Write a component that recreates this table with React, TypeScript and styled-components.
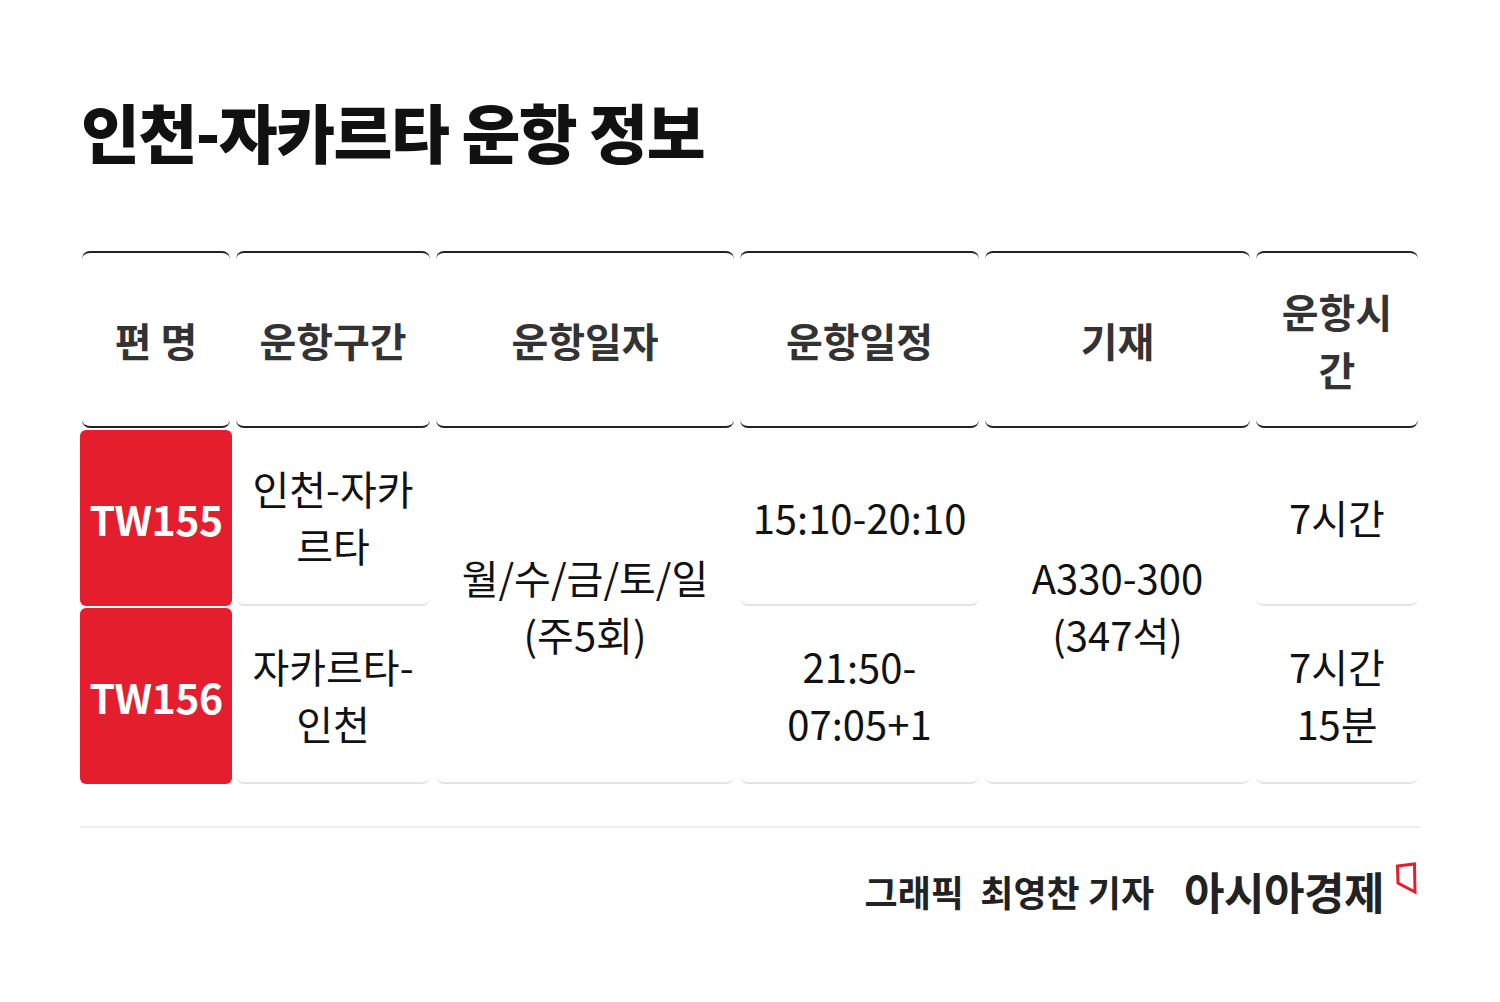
import React from "react";
import styled, { createGlobalStyle } from "styled-components";

const Global = createGlobalStyle`
  html, body { margin: 0; padding: 0; background: #fff; }
  body { font-family: "Noto Sans CJK KR", "Noto Sans", sans-serif; }
`;

const Page = styled.div`
  width: 1500px;
  height: 1002px;
  box-sizing: border-box;
  padding: 82px 80px 0 80px;
  background: #fff;
`;

const Title = styled.h1`
  margin: 0 0 0 1px;
  font-size: 64px;
  line-height: 96px;
  font-weight: 900;
  letter-spacing: -1.5px;
  color: #111;
`;

const Grid = styled.div`
  margin-top: 73px;
  display: grid;
  grid-template-columns: 152px 198px 302px 243px 269px minmax(0, 1fr);
  grid-template-rows: 177px 176px 176px;
  column-gap: 2px;
  row-gap: 2px;
`;

const HeadCell = styled.div`
  margin: 0 2px;
  min-width: 0;
  border-top: 2px solid #222;
  border-bottom: 2px solid #222;
  border-radius: 8px;
  display: flex;
  align-items: center;
  justify-content: center;
  text-align: center;
  font-size: 40px;
  line-height: 58px;
  font-weight: 700;
  color: #333;
  padding: 0 16px;
`;

const Cell = styled.div<{ $rows?: number }>`
  margin: 0 2px;
  min-width: 0;
  grid-row: span ${(p) => p.$rows ?? 1};
  border-bottom: 2px solid #e4e4e4;
  border-radius: 8px;
  display: flex;
  align-items: center;
  justify-content: center;
  text-align: center;
  font-size: 40px;
  line-height: 57px;
  font-weight: 400;
  color: #111;
  padding: 0 8px;
`;

const Flight = styled.div`
  background: #e41e2d;
  border-radius: 6px;
  display: flex;
  align-items: center;
  justify-content: center;
  font-size: 41px;
  font-weight: 700;
  color: #fff;
  letter-spacing: -0.5px;
`;

const Rule = styled.div`
  margin-top: 42px;
  height: 2px;
  background: #eeeeee;
`;

const Footer = styled.div`
  margin-top: 31px;
  display: flex;
  justify-content: flex-end;
  align-items: center;
`;

const Credit = styled.span`
  font-size: 36px;
  font-weight: 700;
  color: #222;
  white-space: pre;
`;

const Logo = styled.span`
  margin-left: 30px;
  font-size: 44px;
  font-weight: 700;
  color: #222;
  letter-spacing: -0.5px;
`;

const Mark = styled.svg`
  margin-left: 12px;
  align-self: flex-start;
  margin-top: 2px;
`;

export default function App() {
  return (
    <>
      <Global />
      <Page>
        <Title>인천-자카르타 운항 정보</Title>
        <Grid>
          <HeadCell>편 명</HeadCell>
          <HeadCell>운항구간</HeadCell>
          <HeadCell>운항일자</HeadCell>
          <HeadCell>운항일정</HeadCell>
          <HeadCell>기재</HeadCell>
          <HeadCell>운항시간</HeadCell>

          <Flight>TW155</Flight>
          <Cell>인천-자카<br />르타</Cell>
          <Cell $rows={2}>월/수/금/토/일<br />(주5회)</Cell>
          <Cell>15:10-20:10</Cell>
          <Cell $rows={2}>A330-300<br />(347석)</Cell>
          <Cell>7시간</Cell>

          <Flight>TW156</Flight>
          <Cell>자카르타-<br />인천</Cell>
          <Cell>21:50-<br />07:05+1</Cell>
          <Cell>7시간<br />15분</Cell>
        </Grid>
        <Rule />
        <Footer>
          <Credit>{"그래픽  최영찬 기자"}</Credit>
          <Logo>아시아경제</Logo>
          <Mark width="24" height="34" viewBox="0 0 24 34">
            <polygon
              points="1.5,5 18.5,3 19,31 2,22"
              fill="none"
              stroke="#e41e2d"
              strokeWidth="3"
              strokeLinejoin="miter"
            />
          </Mark>
        </Footer>
      </Page>
    </>
  );
}
